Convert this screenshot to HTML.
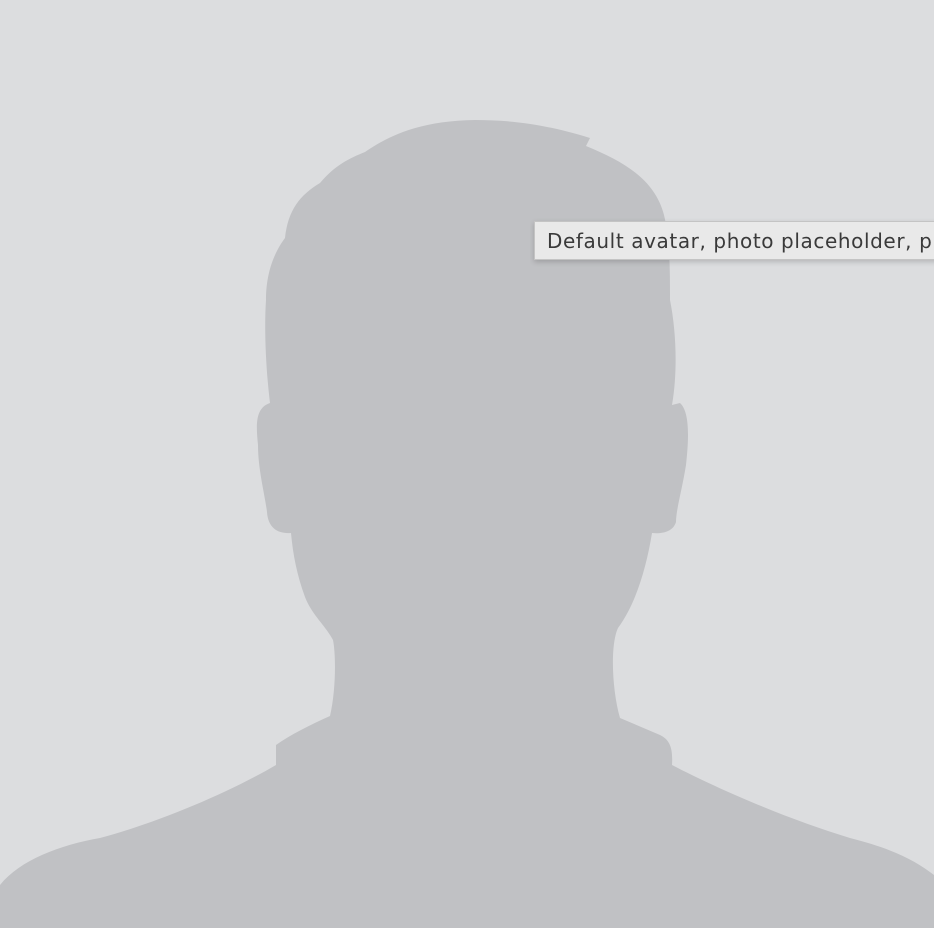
<!DOCTYPE html>
<html><head><meta charset="utf-8"><style>
html,body{margin:0;padding:0;width:934px;height:928px;overflow:hidden;background:#dcdddf}
svg{position:absolute;left:0;top:0}
.clip{position:absolute;left:530px;top:215px;width:404px;height:52px;overflow:hidden}
.tip{position:absolute;left:4px;top:6px;width:440px;height:39px;background:#e9e9e9;border:1px solid #c4c4c4;box-shadow:0 2px 5px rgba(0,0,0,0.18);box-sizing:border-box;font-family:"DejaVu Sans","Liberation Sans",sans-serif;font-size:20px;letter-spacing:0.6px;color:#3a3a3a;line-height:38px;padding-left:12px;white-space:nowrap;overflow:hidden}
</style></head><body>
<svg width="934" height="928" viewBox="0 0 934 928">
<path fill="#c0c1c4" d="M475 120 C510 120 545 124 590 138 L586 146 C625 162 655 180 664 215 C670 240 670 270 670 300 C676 330 678 370 672 405 L680 403 C688 410 690 430 686 465 C682 490 676 510 676 522 C673 532 662 534 652 533 C646 570 635 605 618 628 C610 645 612 690 620 718 L660 735 C670 740 673 748 672 765 C720 790 790 820 850 838 C890 848 915 860 934 875 L934 928 L0 928 L0 885 C20 860 60 845 100 838 C160 822 230 792 276 765 L276 745 C290 735 310 725 330 716 C336 690 336 655 333 640 C325 625 312 615 305 597 C297 575 293 555 291 533 C278 534 268 528 267 512 C265 495 258 470 258 445 C256 425 255 408 270 403 C266 370 264 330 266 300 C266 270 276 250 285 238 C288 210 300 195 320 183 C335 165 350 158 365 152 C390 135 420 121 475 120 Z"/>
</svg>
<div class="clip"><div class="tip">Default avatar, photo placeholder, profile</div></div>
</body></html>
